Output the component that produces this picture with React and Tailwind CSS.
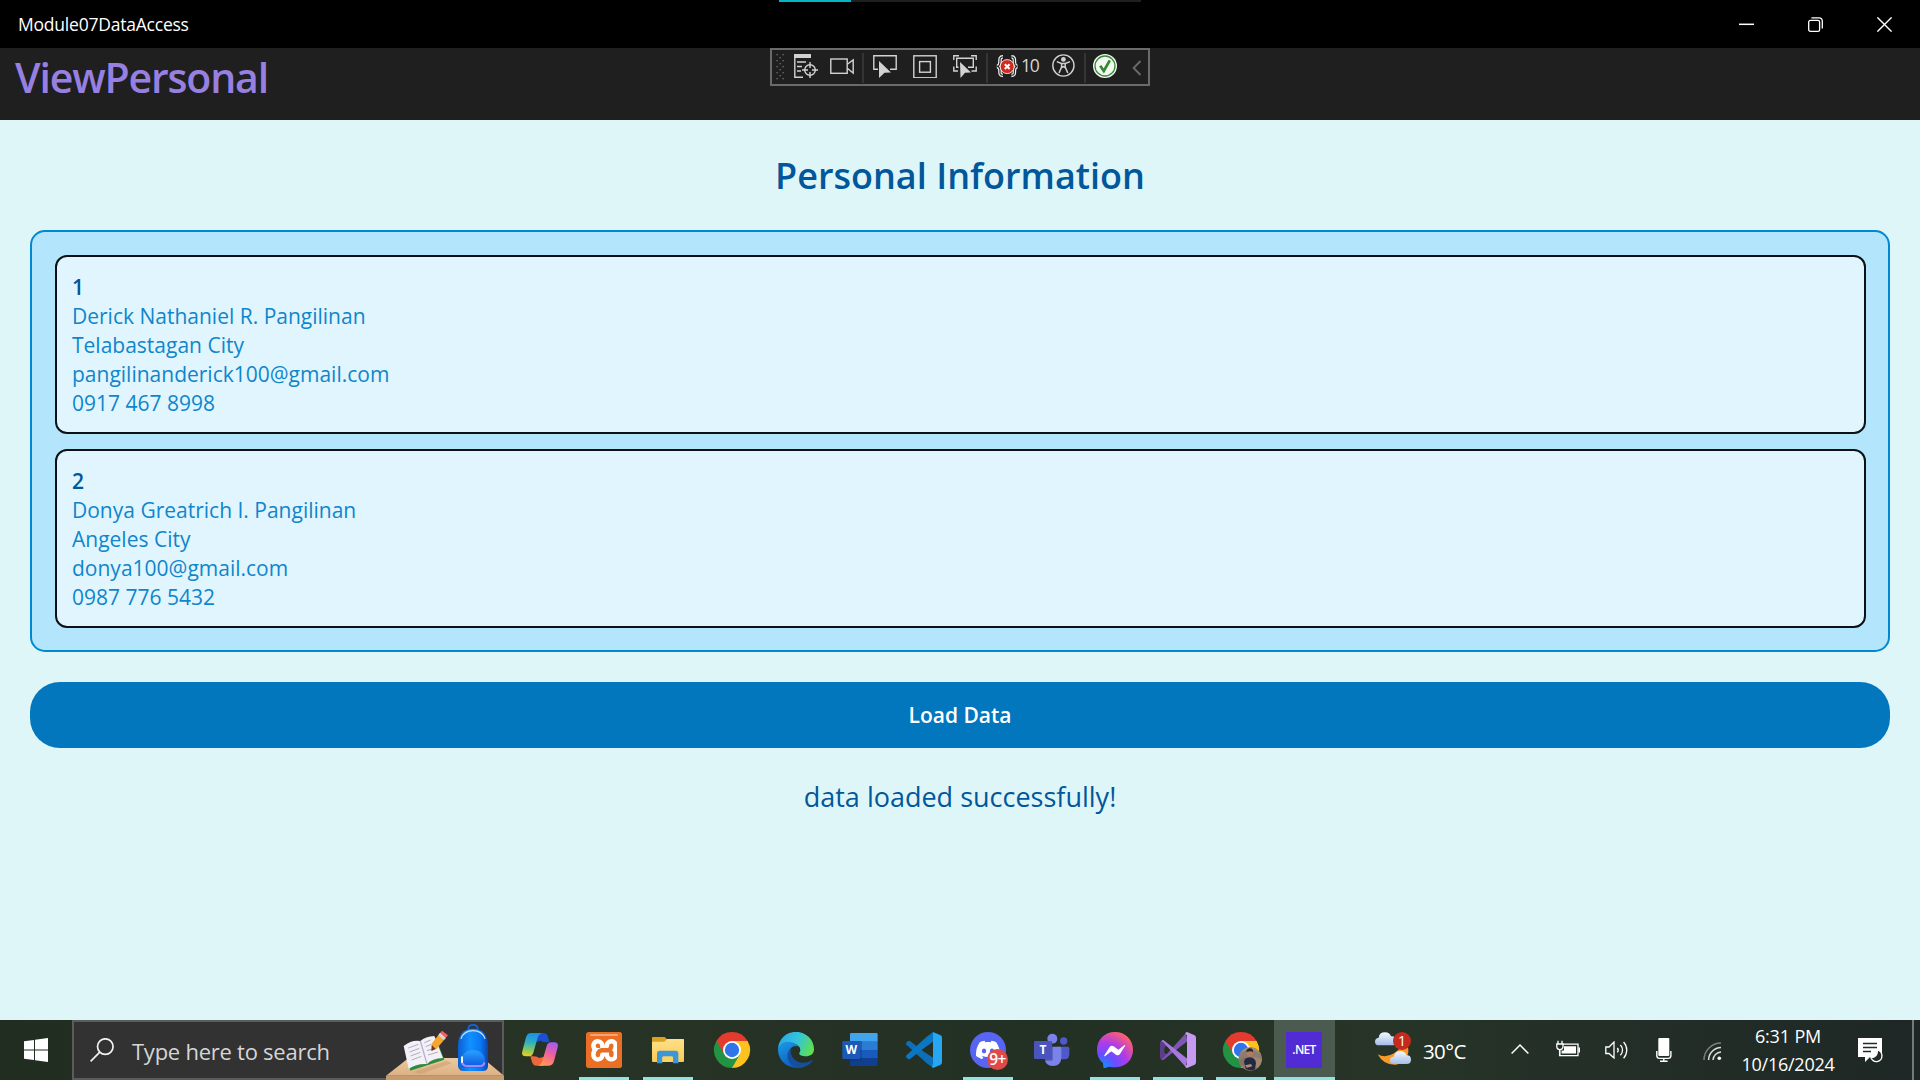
import React from "react";
import { SiXampp, SiDiscord } from "react-icons/si";

const people = [
  {
    id: "1",
    name: "Derick Nathaniel R. Pangilinan",
    city: "Telabastagan City",
    email: "pangilinanderick100@gmail.com",
    phone: "0917 467 8998",
  },
  {
    id: "2",
    name: "Donya Greatrich I. Pangilinan",
    city: "Angeles City",
    email: "donya100@gmail.com",
    phone: "0987 776 5432",
  },
];

/* ---------- window chrome ---------- */

function TitleBar() {
  return (
    <header className="relative flex h-12 shrink-0 items-center justify-between bg-black pr-px">
      <div className="absolute left-[779px] top-0 flex h-[2px] w-[362px] bg-[#1f1f1f]">
        <div className="h-full w-[72px] bg-[#00b7c3]" />
      </div>
      <span className="pl-[18px] text-[17.5px] leading-6 tracking-[-0.22px] text-white">Module07DataAccess</span>
      <div className="flex">
        <span className="flex h-12 w-[69px] items-center justify-center">
          <svg width="15" height="15" viewBox="0 0 15 15" stroke="#fff" strokeWidth="1.5">
            <path d="M0 7.3H15" />
          </svg>
        </span>
        <span className="flex h-12 w-[69px] items-center justify-center">
          <svg width="15" height="15" viewBox="0 0 15 15" fill="none" stroke="#fff" strokeWidth="1.3">
            <rect x="0.7" y="3.4" width="10.9" height="10.9" rx="1.6" />
            <path d="M3.4 0.9H11.3A3 3 0 0 1 14.3 3.9V11.4" />
          </svg>
        </span>
        <span className="flex h-12 w-[69px] items-center justify-center">
          <svg width="15" height="15" viewBox="0 0 15 15" stroke="#fff" strokeWidth="1.4">
            <path d="M0.4 0.4L14.6 14.6M14.6 0.4L0.4 14.6" />
          </svg>
        </span>
      </div>
    </header>
  );
}

function DebugIcon({ children, className = "" }) {
  return (
    <svg width="24" height="24" viewBox="0 0 24 24" fill="none" stroke="#d2d2d2" strokeWidth="1.4" className={"shrink-0 " + className}>
      {children}
    </svg>
  );
}

const braces =
  "M7 2.8C3.6 2.8 4 5.5 4 8.2C4 11 3 12 1.2 12.4C3 12.8 4 13.8 4 16.6C4 19.3 3.6 21.4 7 21.4M15.4 2.8C18.8 2.8 18.4 5.5 18.4 8.2C18.4 11 19.4 12 21.2 12.4C19.4 12.8 18.4 13.8 18.4 16.6C18.4 19.3 18.8 21.4 15.4 21.4";

function DebugToolbar() {
  const dots = [];
  for (let r = 0; r < 9; r++) {
    const xs = r % 2 === 0 ? [0.5, 6.5] : [3.5];
    xs.forEach((x) => dots.push(<rect key={r + "-" + x} x={x} y={r * 3} width="1.3" height="1.3" />));
  }
  return (
    <div className="absolute left-[770px] top-0 flex h-[38px] w-[380px] items-start border-2 border-[#6a6a6a] bg-[#1f1f1f] pt-1">
      <svg width="8" height="27" viewBox="0 0 8 27" fill="#707070" className="ml-1 shrink-0">
        {dots}
      </svg>
      <DebugIcon className="ml-[10px]">
        <path d="M0 0H17V4H0Z" fill="#d2d2d2" stroke="none" />
        <path d="M0.8 4V23.3H9M3 8H12M3 12.5H8M3 17H7" />
        <circle cx="16" cy="16" r="5.3" />
        <path d="M16 8V14M16 18V24M8 16H14M18 16H24" />
      </DebugIcon>
      <DebugIcon className="ml-3">
        <rect x="0.8" y="5" width="16.4" height="14.3" />
        <path d="M17.3 10.3L23.2 6V19L17.3 14.3" />
      </DebugIcon>
      <i className="ml-2 mt-[-1px] h-[30px] w-[2px] shrink-0 bg-[#343434]" />
      <DebugIcon className="ml-[9px]">
        <path d="M5 15.3H0.8V1.7H23.2V15.3H17" />
        <path d="M6 7L18 18.5L11.5 18.8L6 24Z" fill="#d2d2d2" stroke="none" />
      </DebugIcon>
      <DebugIcon className="ml-4">
        <rect x="0.8" y="1.8" width="22.4" height="22" />
        <rect x="6.6" y="7.6" width="10.8" height="10.6" />
      </DebugIcon>
      <DebugIcon className="ml-4">
        <path d="M5.5 13.3H3.7V4.3H20.3V13.3H15M0.8 6V1.7H6M18 1.7H23.2V6M0.8 12.5V17H5M18.5 17H23.2V12.5" />
        <path d="M7 8L18 18.5L12 18.8L7.5 24Z" fill="#d2d2d2" stroke="none" />
      </DebugIcon>
      <i className="ml-[9px] mt-[-1px] h-[30px] w-[2px] shrink-0 bg-[#343434]" />
      <DebugIcon className="ml-2">
        <path d={braces} stroke="#f2f2f2" strokeWidth="3.6" />
        <path d={braces} stroke="#2a2a2a" strokeWidth="1.2" />
        <circle cx="11.2" cy="12.6" r="7" fill="#d5281d" stroke="#f2f2f2" strokeWidth="0.9" />
        <path d="M8.8 10.2L13.6 15M13.6 10.2L8.8 15" stroke="#fff" strokeWidth="2" />
      </DebugIcon>
      <span className="ml-px mt-[-1px] w-[31px] text-[17.5px] leading-6 tracking-[-1.2px] text-[#d6d6d6]">10</span>
      <DebugIcon>
        <circle cx="11.4" cy="11.5" r="10.6" />
        <circle cx="11.4" cy="5.4" r="2.4" fill="#d2d2d2" stroke="none" />
        <path d="M4.8 7.6L9.6 9.6V13L7 19M18 7.6L13.2 9.6V13L15.8 19M9.6 9.6H13.2M9.6 13.6L11.4 12.6L13.2 13.6" strokeWidth="1.5" />
      </DebugIcon>
      <i className="ml-2 mt-[-1px] h-[30px] w-[2px] shrink-0 bg-[#343434]" />
      <DebugIcon className="ml-[7px]">
        <circle cx="12" cy="12" r="12" fill="#f3f8f3" stroke="none" />
        <circle cx="12" cy="12" r="10" stroke="#388a34" strokeWidth="1.3" />
        <path d="M7.2 11.8L10.8 17L16.8 6.4" stroke="#2f8a2b" strokeWidth="2.7" />
      </DebugIcon>
      <svg width="10" height="24" viewBox="0 0 10 24" fill="none" stroke="#6c6c6c" strokeWidth="1.8" className="ml-[15px] shrink-0">
        <path d="M8.5 7L1.6 14L8.5 21" />
      </svg>
    </div>
  );
}

function NavBar() {
  return (
    <div className="relative h-[72px] shrink-0 bg-[#1f1f1f]">
      <h1 className="pl-[15px] text-[41px] font-semibold leading-[58px] tracking-[-1.15px] text-[#9880e0]">ViewPersonal</h1>
      <DebugToolbar />
    </div>
  );
}

/* ---------- page content ---------- */

function PersonCard({ person }) {
  return (
    <article className="rounded-xl border-2 border-[#0c1214] bg-[#e1f5fe] px-[15px] pb-[14px] pt-4 text-[21px] leading-[29px] text-[#0f86cb]">
      <h3 className="font-semibold text-[#01579b]">{person.id}</h3>
      <p>{person.name}</p>
      <p>{person.city}</p>
      <p>{person.email}</p>
      <p>{person.phone}</p>
    </article>
  );
}

function Content() {
  return (
    <main className="flex flex-1 flex-col bg-[#dff6f8] px-[30px] pt-[31px]">
      <h2 className="text-center text-[36px] font-semibold leading-[50px] text-[#01579b]">Personal Information</h2>
      <section className="mt-[29px] flex flex-col gap-[15px] rounded-[15px] border-2 border-[#0288d1] bg-[#b3e5fc] pb-[22px] pl-[23px] pr-[22px] pt-[23px]">
        {people.map((p) => (
          <PersonCard key={p.id} person={p} />
        ))}
      </section>
      <button className="mt-[30px] h-[66px] rounded-[30px] bg-[#0277bd] text-[21px] font-semibold leading-[28px] text-white">Load Data</button>
      <p className="mt-[30px] text-center text-[27px] leading-[38px] text-[#01579b]">data loaded successfully!</p>
    </main>
  );
}

/* ---------- taskbar ---------- */

function SearchBox() {
  return (
    <div className="relative flex h-[60px] w-[432px] items-center border-2 border-[#5b5b5b] bg-[#323232]">
      <svg width="24" height="24" viewBox="0 0 24 24" fill="none" stroke="#f2f2f2" strokeWidth="1.7" className="ml-4">
        <circle cx="15.3" cy="8.6" r="7.8" />
        <path d="M9.8 14.2L0.6 23.4" />
      </svg>
      <span className="ml-[18px] pt-[2px] text-[22px] leading-[30px] tracking-[-0.25px] text-[#d6d6d6]">Type here to search</span>
      <svg width="118" height="58" viewBox="1158 36 354 174" className="absolute -right-0.5 top-0">
        <defs>
          <linearGradient id="desk" x1="0" y1="0" x2="0" y2="1">
            <stop offset="0" stopColor="#ecc9a0" />
            <stop offset="1" stopColor="#dcb184" />
          </linearGradient>
          <linearGradient id="bag" x1="0" y1="0" x2="1" y2="0">
            <stop offset="0" stopColor="#0a5fd0" />
            <stop offset="0.4" stopColor="#1291ff" />
            <stop offset="0.75" stopColor="#0a78f5" />
            <stop offset="1" stopColor="#0a45b0" />
          </linearGradient>
          <linearGradient id="pocket" x1="0" y1="0" x2="0" y2="1">
            <stop offset="0" stopColor="#2aa0ff" />
            <stop offset="1" stopColor="#0a56e0" />
          </linearGradient>
        </defs>
        <path d="M1226 144H1448L1512 197H1158Z" fill="url(#desk)" />
        <path d="M1158 197H1512V210H1158Z" fill="#c69c6f" />
        <path d="M1240 186L1340 152L1356 160L1262 192Z" fill="#c79a6c" opacity="0.5" />
        <path d="M1213 110L1231 182L1333 149L1308 84Z" fill="#2f8c3c" />
        <path d="M1211 108L1226 176Q1250 160 1281 162Q1296 146 1329 144L1303 78Q1276 80 1261 93Q1236 88 1211 108Z" fill="#f3f0f8" />
        <path d="M1261 93L1281 162" stroke="#b9b2cf" strokeWidth="4" />
        <path d="M1225 114L1255 103M1229 126L1258 115M1232 138L1261 127M1235 150L1264 139M1273 98L1292 90M1277 110L1294 103M1281 122L1310 113M1284 135L1314 126" stroke="#a39cb0" strokeWidth="2.5" />
        <path d="M1326 62L1344 76L1335 86L1318 71Z" fill="#f0635c" />
        <path d="M1320 69L1337 84L1310 116L1297 122L1295 101Z" fill="#f7a62c" />
        <path d="M1320 69L1337 84L1332 90L1315 76Z" fill="#d9d4dc" />
        <path d="M1295 105L1307 117L1294 123Z" fill="#6b3a2e" />
        <path d="M1405 58Q1404 45 1419 45Q1434 45 1433 58" fill="none" stroke="#1560d8" strokeWidth="6" />
        <path d="M1374 110Q1374 56 1419 56Q1464 56 1464 110V168Q1464 183 1448 183H1390Q1376 183 1374 168Z" fill="url(#bag)" />
        <path d="M1383 86Q1392 62 1419 62Q1446 62 1455 86" fill="none" stroke="#bfe0ff" strokeWidth="4" />
        <path d="M1384 150Q1388 121 1419 121Q1450 121 1455 150V165Q1455 172 1446 172H1392Q1384 172 1384 165Z" fill="url(#pocket)" />
        <path d="M1386 157Q1390 168 1400 168H1440Q1452 168 1453 157" fill="none" stroke="#9b8cff" strokeWidth="6" />
        <path d="M1386 142V156" stroke="#fff" strokeWidth="6" strokeLinecap="round" />
      </svg>
    </div>
  );
}

function CopilotIcon() {
  return (
    <svg width="36" height="36" viewBox="66 66 108 108">
      <defs>
        <linearGradient id="cpA" x1="0.4" y1="0" x2="0.3" y2="1">
          <stop offset="0" stopColor="#1c8fe8" />
          <stop offset="0.4" stopColor="#2fb0c0" />
          <stop offset="0.7" stopColor="#7cc864" />
          <stop offset="1" stopColor="#f0cf20" />
        </linearGradient>
        <linearGradient id="cpB" x1="0.7" y1="0" x2="0.3" y2="1">
          <stop offset="0" stopColor="#a45cf0" />
          <stop offset="0.45" stopColor="#ee5f9e" />
          <stop offset="1" stopColor="#ff9a52" />
        </linearGradient>
      </defs>
      <path d="M108 69H131Q141 69 144 80L149 97H138Q128 97 122 92L108 96Z" fill="#1a4fd2" />
      <path d="M132 167H109Q99 167 96 156L91 139H102Q112 139 118 144L132 140Z" fill="#f0663c" />
      <path d="M93 69H126Q116 72 112 86L100 128Q97 139 86 139H77Q63 139 67 124L78 82Q82 69 93 69Z" fill="url(#cpA)" />
      <path d="M147 167H114Q124 164 128 150L140 108Q143 97 154 97H163Q177 97 173 112L162 154Q158 167 147 167Z" fill="url(#cpB)" />
    </svg>
  );
}

function XamppIcon() {
  return (
    <span className="relative flex size-9 items-center justify-center overflow-hidden rounded-[3px] bg-[#e8722a]">
      <span className="absolute size-[26px] bg-white" />
      <SiXampp size={37} color="#ea6f25" className="relative shrink-0" />
      <span className="absolute left-1 right-1 top-0.5 h-0.5 rounded-full bg-[#f4a577]" />
    </span>
  );
}

function FolderIcon() {
  return (
    <svg width="36" height="36" viewBox="450 66 108 108">
      <defs>
        <linearGradient id="fold" x1="0" y1="0" x2="0" y2="1">
          <stop offset="0" stopColor="#ffe08a" />
          <stop offset="1" stopColor="#f8cb55" />
        </linearGradient>
      </defs>
      <path d="M456 84Q456 81 459 81H494L501 88H552V110H456Z" fill="#dca11c" />
      <path d="M456 95H493L501 87H549Q552 87 552 90V153Q552 156 549 156H459Q456 156 456 153Z" fill="url(#fold)" />
      <path d="M471 160V130Q471 122 479 122H527Q535 122 535 130V160H519V143Q519 139 515 139H491Q487 139 487 143V160Z" fill="#3c97da" />
      <path d="M487 156V142H519V156Z" fill="#f9d264" />
    </svg>
  );
}

function ChromeIcon({ avatar = false }) {
  return (
    <svg width="36" height="36" viewBox="0 0 108 108" className="overflow-visible">
      <path d="M54 54L7.2 27A54 54 0 0 1 100.8 27Z" fill="#e33b2e" />
      <path d="M54 54L100.8 27A54 54 0 0 1 54 108Z" fill="#fcc31e" />
      <path d="M54 54V108A54 54 0 0 1 7.2 27Z" fill="#229342" />
      <path d="M54 27H100.8L77.4 67.5Z" fill="#fcc31e" />
      <path d="M77.4 67.5L54 108L30.6 67.5Z" fill="#229342" />
      <path d="M30.6 67.5L7.2 27L54 27Z" fill="#e33b2e" />
      <path d="M30.6 67.5L7.2 27Q4 60 54 81Z" fill="#229342" />
      <circle cx="54" cy="54" r="27" fill="#fff" />
      <circle cx="54" cy="54" r="21.5" fill="#2f74e8" />
      {avatar && (
        <g>
          <circle cx="82" cy="81" r="35" fill="#8f7c6c" />
          <path d="M50 67A35 35 0 0 1 114 67Q98 52 82 54Q62 54 50 67Z" fill="#a98f7c" />
          <path d="M48 90Q54 78 66 76L72 100H52Z" fill="#8b6f60" />
          <path d="M92 74L117 82Q115 96 106 106L90 104Z" fill="#a5876f" />
          <ellipse cx="80" cy="64" rx="9" ry="11" fill="#b07c62" />
          <path d="M70 60Q70 49 81 49Q91 49 90 60Q84 55 70 60Z" fill="#28242a" />
          <path d="M63 90Q64 77 80 76Q96 77 99 92L96 112Q82 118 68 110Z" fill="#1f2a44" />
          <path d="M66 100L84 96L88 103L72 107Z" fill="#b98a70" />
        </g>
      )}
    </svg>
  );
}

function EdgeIcon() {
  return (
    <svg width="36" height="36" viewBox="834 66 108 108">
      <defs>
        <linearGradient id="edgeTop" x1="0" y1="0.3" x2="1" y2="0.6">
          <stop offset="0" stopColor="#28a8e8" />
          <stop offset="0.5" stopColor="#33c4dc" />
          <stop offset="1" stopColor="#5fe04c" />
        </linearGradient>
        <linearGradient id="edgeL" x1="0" y1="0" x2="0.5" y2="1">
          <stop offset="0" stopColor="#1d9be6" />
          <stop offset="1" stopColor="#0c5fc0" />
        </linearGradient>
      </defs>
      <path d="M834 117A54 52 0 0 1 942 118C942 133 930 139 918 139C904 139 896 134 898 129C904 121 902 107 884 101C862 94 838 104 834 117Z" fill="url(#edgeTop)" />
      <path d="M834 117C838 98 860 90 880 98C888 101 893 105 896 110C880 102 866 116 868 134C870 154 888 168 906 170A54 54 0 0 1 834 117Z" fill="url(#edgeL)" />
      <path d="M876 112C866 124 876 156 906 158C922 159 932 153 936 150Q940 149 937 154A56 56 0 0 1 896 174C868 170 854 140 868 120Q871 114 876 112Z" fill="#154f9e" />
    </svg>
  );
}

function WordIcon() {
  return (
    <svg width="36" height="36" viewBox="1025 66 108 108">
      <path d="M1053 69H1128Q1132 69 1132 73V95H1049V73Q1049 69 1053 69Z" fill="#41a5ee" />
      <path d="M1049 95H1132V120H1049Z" fill="#2b7cd3" />
      <path d="M1049 120H1132V144H1049Z" fill="#185abd" />
      <path d="M1049 144H1132V164Q1132 168 1128 168H1053Q1049 168 1049 164Z" fill="#103f91" />
      <rect x="1049" y="93" width="36" height="60" fill="#0b2d6b" opacity="0.35" />
      <rect x="1026" y="93" width="54" height="54" rx="4" fill="#1b58b8" />
      <text x="1053" y="133" textAnchor="middle" fontSize="36" fontWeight="700" fill="#fff" fontFamily="Open Sans, sans-serif">
        W
      </text>
    </svg>
  );
}

function VsCodeIcon() {
  return (
    <svg width="36" height="36" viewBox="0 0 108 108">
      <path d="M81 1L34 44L13 28Q9 25 5 28L2 31Q-2 35 2 39L62 94L81 107L86 80L46 54L84 27Z" fill="#0b70b8" />
      <path d="M2 69Q-2 73 2 77L5 80Q9 83 13 80L81 27V1L62 14Z" fill="#0b77c2" />
      <path d="M81 0L104 10Q108 12 108 17V91Q108 96 104 98L81 108Q76 104 81 96Z" fill="#25a7f2" />
    </svg>
  );
}

function DiscordIcon() {
  return (
    <span className="relative flex size-9 items-center justify-center rounded-full bg-[#5865f2]">
      <SiDiscord size={24} color="#fff" />
      <span className="absolute left-[17px] top-[17px] flex size-[21px] items-center justify-center rounded-full bg-[#e0484a] text-[15.5px] font-semibold leading-none tracking-[-0.6px] text-white">
        9+
      </span>
    </span>
  );
}

function TeamsIcon() {
  return (
    <svg width="36" height="36" viewBox="342 66 108 108">
      <circle cx="431" cy="93" r="11" fill="#5059c9" />
      <path d="M412 110H443Q448 110 448 115V132Q448 148 434 148H412Z" fill="#5059c9" />
      <circle cx="397" cy="86" r="15" fill="#7b83eb" />
      <path d="M374 110H420Q424 110 424 114V142Q424 168 398 168Q376 168 374 144Z" fill="#7b83eb" />
      <path d="M374 98H398V148Q398 152 394 152H374Z" fill="#30366f" opacity="0.5" />
      <rect x="342" y="93" width="54" height="54" rx="4" fill="#4b53bc" />
      <text x="369" y="132" textAnchor="middle" fontSize="36" fontWeight="700" fill="#fff" fontFamily="Open Sans, sans-serif">
        T
      </text>
    </svg>
  );
}

function MessengerIcon() {
  return (
    <svg width="36" height="36" viewBox="531 66 108 108">
      <defs>
        <radialGradient id="msg" cx="0.15" cy="1" r="1.1">
          <stop offset="0" stopColor="#0a95ff" />
          <stop offset="0.35" stopColor="#6a4dff" />
          <stop offset="0.65" stopColor="#b03be8" />
          <stop offset="1" stopColor="#ff6070" />
        </radialGradient>
      </defs>
      <path d="M585 66C616 66 639 89 639 119C639 150 616 172 585 172Q576 172 568 170L555 174Q550 175 550 170L549 159Q531 145 531 119C531 89 554 66 585 66Z" fill="url(#msg)" />
      <path d="M553 136L569 111Q574 104 581 109L593 118Q595 119 597 118L613 106Q618 103 615 108L600 132Q595 139 588 134L576 125Q574 124 571 126L556 138Q551 140 553 136Z" fill="#fff" />
    </svg>
  );
}

function VisualStudioIcon() {
  return (
    <svg width="36" height="36" viewBox="0 0 108 108">
      <path d="M2 29Q0 31 0 34V75Q0 78 2 80L10 84L25 70L13 62V47L25 38L10 24Z" fill="#5c3d8c" />
      <path d="M10 84Q5 84 2 80Q6 82 9 79L78 3L82 28Z" fill="#7f56b5" />
      <path d="M2 29Q5 24 10 24L82 80L78 106L9 30Q6 27 2 29Z" fill="#a779dc" />
      <path d="M81 0L104 10Q108 12 108 17V91Q108 96 104 98L81 108Q76 108 76 103L81 98V9L76 6Q76 0 81 0Z" fill="#c79af2" />
    </svg>
  );
}

function NetIcon() {
  return (
    <span className="flex size-9 items-center justify-center bg-[#512bd4] text-[12px] font-semibold leading-none tracking-[-0.7px] text-white">.NET</span>
  );
}

function AppSlot({ children, width = "w-16", running = false }) {
  return (
    <div className={"relative flex h-[60px] items-center justify-center " + width}>
      {children}
      {running && <span className="absolute bottom-0 h-[3px] w-[50px] bg-[#8fe3e2]" />}
    </div>
  );
}

function WeatherIcon() {
  return (
    <span className="relative block h-9 w-[38px]">
      <svg width="38" height="36" viewBox="102 66 114 108">
        <defs>
          <linearGradient id="cloud" x1="0" y1="0" x2="0" y2="1">
            <stop offset="0" stopColor="#f3f7fe" />
            <stop offset="1" stopColor="#a3bde8" />
          </linearGradient>
        </defs>
        <path d="M113 133Q136 146 162 130Q188 112 192 92Q206 104 205 126Q202 160 168 164Q130 166 113 133Z" fill="#f79a28" />
        <path d="M117 106Q105 106 105 95Q105 85 116 83Q118 67 135 67Q149 67 153 79Q168 78 168 92Q168 106 154 106Z" fill="url(#cloud)" />
        <path d="M162 162Q150 162 150 151Q150 141 161 140Q164 123 182 123Q196 124 200 136Q213 136 213 149Q213 162 200 162Z" fill="url(#cloud)" />
      </svg>
      <span className="absolute left-[19px] top-0 flex size-[18px] items-center justify-center rounded-full bg-[#c42b1c] text-[14px] leading-none text-white">1</span>
    </span>
  );
}

function Tray() {
  return (
    <div className="flex h-[60px] items-center">
      <div className="ml-[39px]">
        <WeatherIcon />
      </div>
      <span className="ml-[11px] w-[88px] pt-px text-[20.5px] leading-7 tracking-[-0.6px] text-white">30°C</span>
      <svg width="18" height="12" viewBox="0 0 18 12" fill="none" stroke="#fff" strokeWidth="1.5" className="mt-[-2px]">
        <path d="M0.6 10.6L9 2L17.4 10.6" />
      </svg>
      <svg width="24" height="18" viewBox="0 0 24 18" fill="none" stroke="#fff" strokeWidth="1.3" className="ml-[27px] mt-[-2px]">
        <path d="M7 4.2H22V15.6H3.6V10" />
        <path d="M8 6.2H20V13.6H5.6V10.5H8Z" fill="#fff" stroke="none" />
        <path d="M23.2 7.5V12.5" strokeWidth="1.6" />
        <path d="M2 0.8V4M6 0.8V4M0.8 4H7V6.5A3 3 0 0 1 0.8 6.5ZM3.8 9.5V15" />
      </svg>
      <svg width="23" height="18" viewBox="0 0 23 18" fill="none" stroke="#fff" strokeWidth="1.3" className="ml-[25px]">
        <path d="M0.8 6V12.5H4L9 17V1L4 6Z" />
        <path d="M12.3 7A3.4 3.4 0 0 1 12.3 11.4M15.4 4A7.2 7.2 0 0 1 15.4 14.2M18.6 1A12 12 0 0 1 18.6 17.2" />
      </svg>
      <svg width="16" height="24" viewBox="0 0 16 24" fill="none" stroke="#fff" strokeWidth="1.4" className="ml-7">
        <rect x="2.3" y="0" width="11" height="18" rx="1" fill="#fff" stroke="none" />
        <path d="M0.8 13V17.5Q0.8 20.4 3.6 20.4H12Q14.9 20.4 14.9 17.5V13M7.8 20.4V23.3M4 23.3H11.6" />
      </svg>
      <svg width="19" height="19" viewBox="0 0 19 19" fill="none" stroke="#fff" strokeWidth="1.5" className="ml-[31px] mt-[3px]">
        <path d="M1 18A17 17 0 0 1 18 1" opacity="0.4" />
        <path d="M5.6 18A12.6 12.6 0 0 1 18 5.6M10 18A8.4 8.4 0 0 1 18 10" opacity="0.85" />
        <circle cx="16.3" cy="16.3" r="1.8" fill="#fff" stroke="none" />
      </svg>
      <div className="ml-[18px] flex h-[60px] w-24 flex-col items-center pt-[2px] text-[18px] leading-7 text-white">
        <span className="tracking-[-0.15px]">6:31 PM</span>
        <span className="tracking-[-0.25px]">10/16/2024</span>
      </div>
      <svg width="25" height="25" viewBox="0 0 25 25" className="ml-[22px] mt-px">
        <path d="M0 0H24V19H12L7 24V19H0Z" fill="#fff" />
        <path d="M5 5.5H19M5 9.5H19M5 13.5H13" stroke="#222b26" strokeWidth="1.4" />
        <path d="M19.5 12Q19.5 19.5 12.8 19.8Q15 24 19 23.6Q24 22.8 24 17.5Q23.6 13.4 19.5 12Z" fill="#222b26" stroke="#fff" strokeWidth="1.3" />
      </svg>
      <span className="ml-[29px] h-[60px] w-[2px] bg-[#737b76]" />
    </div>
  );
}

function Taskbar() {
  return (
    <footer className="flex h-[60px] shrink-0 bg-[linear-gradient(90deg,#202d20_0%,#263325_30%,#233024_55%,#273427_72%,#222d27_88%,#1e2725_100%)]">
      <div className="flex w-[72px] items-center justify-center">
        <svg width="24" height="24" viewBox="0 0 24 24" fill="#fff">
          <path d="M0 3.3L10 1.9V11.4H0ZM11 1.7L24 0V11.4H11ZM0 12.4H10V22.1L0 20.7ZM11 12.4H24V24L11 22.3Z" />
        </svg>
      </div>
      <SearchBox />
      <div className="ml-1 flex">
        <AppSlot><CopilotIcon /></AppSlot>
        <AppSlot running><XamppIcon /></AppSlot>
        <AppSlot running><FolderIcon /></AppSlot>
        <AppSlot><ChromeIcon /></AppSlot>
        <AppSlot><EdgeIcon /></AppSlot>
        <AppSlot><WordIcon /></AppSlot>
        <AppSlot><VsCodeIcon /></AppSlot>
        <AppSlot running><DiscordIcon /></AppSlot>
        <AppSlot><TeamsIcon /></AppSlot>
        <AppSlot width="w-[62px]" running><MessengerIcon /></AppSlot>
        <AppSlot width="w-[64px]" running><VisualStudioIcon /></AppSlot>
        <AppSlot width="w-[62px]" running><ChromeIcon avatar /></AppSlot>
        <div className="ml-0.5 flex h-[60px] w-[61px] items-center justify-center border-b-[3px] border-[#8fe3e2] bg-[#4c5b50] pr-px pt-[3px]">
          <NetIcon />
        </div>
      </div>
      <Tray />
    </footer>
  );
}

export default function App() {
  return (
    <div className="flex h-[1080px] w-[1920px] flex-col overflow-hidden font-['Open_Sans','Noto_Sans',sans-serif]">
      <TitleBar />
      <NavBar />
      <Content />
      <Taskbar />
    </div>
  );
}
